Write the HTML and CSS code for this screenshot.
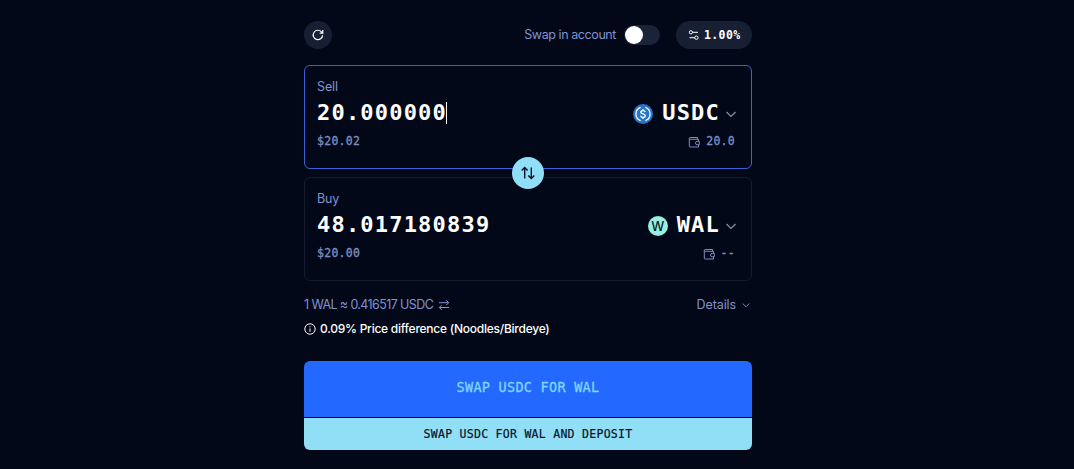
FILE: index.html
```html
<!DOCTYPE html>
<html lang="en">
<head>
    <meta charset="UTF-8">
    <meta name="viewport" content="width=device-width, initial-scale=1.0">
    <title>Swap</title>
    <link rel="stylesheet" href="styles.css">
</head>
<body>
    <main class="swap">
        <div class="toolbar">
            <button class="refresh-btn" aria-label="Refresh">
                <svg width="12" height="12" viewBox="0 0 12 12"><path d="M10.6 6.2A4.7 4.7 0 1 1 9.3 2.7L10.7 4"/><path d="M10.8 1v3.1H7.7"/></svg>
            </button>
            <div class="toolbar-right">
                <span class="switch-label">Swap in account</span>
                <button class="switch" role="switch" aria-checked="false" aria-label="Swap in account"><span class="knob"></span></button>
                <button class="slippage-btn">
                    <svg width="12" height="12" viewBox="0 0 12 12"><circle cx="2.9" cy="3.3" r="1.6"/><path d="M4.8 3.3H10M1.5 8.7h5.2"/><circle cx="8.4" cy="8.7" r="1.7"/></svg>
                    <span>1.00%</span>
                </button>
            </div>
        </div>

        <div class="panels">
            <section class="panel active">
                <div class="label">Sell</div>
                <div class="row">
                    <div class="amount">20.000000<span class="caret"></span></div>
                    <button class="token">
                        <svg class="coin" width="20" height="20" viewBox="0 0 20 20">
                            <circle cx="10" cy="10" r="10" fill="#2775ca"/>
                            <path d="M7.6 3.4a7 7 0 0 0 0 13.2M12.4 3.4a7 7 0 0 1 0 13.2" fill="none" stroke="#fff" stroke-width="1.3"/>
                            <path d="M12.2 8.1C12 7 11.2 6.6 10 6.6c-1.3 0-2.2.6-2.2 1.6 0 2.3 4.5 1.2 4.5 3.5 0 1-.9 1.7-2.3 1.7-1.3 0-2.2-.6-2.4-1.7M10 5v1.6M10 13.4V15" fill="none" stroke="#fff" stroke-width="1.3"/>
                        </svg>
                        <span class="symbol">USDC</span>
                        <svg class="chevron" width="12" height="12" viewBox="0 0 12 12"><path d="M1.5 4L6 8.5 10.5 4"/></svg>
                    </button>
                </div>
                <div class="row sub">
                    <span>$20.02</span>
                    <span class="balance">
                        <svg width="12" height="12" viewBox="0 0 12 12"><path d="M9.5 3.3V1.5H2.2a.9.9 0 0 0 0 1.8h8.3v2M1.3 2.4V10q0 1 1 1h8.2V8.8"/><path d="M11.3 5.3v3.4H9.2a1.7 1.7 0 0 1 0-3.4z"/></svg>
                        <span>20.0</span>
                    </span>
                </div>
            </section>

            <button class="flip-btn" aria-label="Reverse">
                <svg width="16" height="16" viewBox="0 0 16 16"><path d="M4.7 13.6V2.5M1.7 5.5l3-3 3 3M11.3 2.4v11.1M8.3 10.5l3 3 3-3"/></svg>
            </button>

            <section class="panel">
                <div class="label">Buy</div>
                <div class="row">
                    <div class="amount">48.017180839</div>
                    <button class="token">
                        <span class="coin wal">W</span>
                        <span class="symbol">WAL</span>
                        <svg class="chevron" width="12" height="12" viewBox="0 0 12 12"><path d="M1.5 4L6 8.5 10.5 4"/></svg>
                    </button>
                </div>
                <div class="row sub">
                    <span>$20.00</span>
                    <span class="balance">
                        <svg width="12" height="12" viewBox="0 0 12 12"><path d="M9.5 3.3V1.5H2.2a.9.9 0 0 0 0 1.8h8.3v2M1.3 2.4V10q0 1 1 1h8.2V8.8"/><path d="M11.3 5.3v3.4H9.2a1.7 1.7 0 0 1 0-3.4z"/></svg>
                        <span>--</span>
                    </span>
                </div>
            </section>
        </div>

        <div class="info">
            <div class="rate">
                <span class="rate-text">1 WAL ≈ 0.416517 USDC</span>
                <svg width="12" height="12" viewBox="0 0 12 12"><path d="M1 3.7h9.5M8.3 1.3l2.4 2.4-2.4 2.4M11 8.5H1.5M3.7 6.1L1.3 8.5l2.4 2.4"/></svg>
            </div>
            <button class="details">
                <span>Details</span>
                <svg width="12" height="12" viewBox="0 0 12 12"><path d="M2.7 4.5L6 7.8l3.3-3.3"/></svg>
            </button>
        </div>

        <div class="notice">
            <svg width="12" height="12" viewBox="0 0 12 12"><circle cx="6" cy="6" r="5.2"/><path d="M6 5.5v3.2M6 3.2v1.1"/></svg>
            <span>0.09% Price difference (Noodles/Birdeye)</span>
        </div>

        <div class="actions">
            <button class="swap-btn">SWAP USDC FOR WAL</button>
            <button class="deposit-btn">SWAP USDC FOR WAL AND DEPOSIT</button>
        </div>
    </main>
</body>
</html>
```
FILE: styles.css
```css
* {
    margin: 0;
    padding: 0;
    box-sizing: border-box;
}

body {
    background: #020817;
    color: #fff;
    font-family: Inter, "Liberation Sans", sans-serif;
    font-size: 12.5px;
    line-height: 20px;
    overflow: hidden;
}

button {
    background: none;
    border: none;
    color: inherit;
    font: inherit;
    letter-spacing: inherit;
    cursor: pointer;
}

svg {
    display: block;
    flex-shrink: 0;
    fill: none;
    stroke: currentColor;
}

.swap {
    width: 448px;
    margin-left: 304px;
    padding-top: 21px;
}

.toolbar,
.toolbar-right,
.row,
.token,
.balance,
.info,
.rate,
.details,
.notice {
    display: flex;
    align-items: center;
}

.toolbar,
.row,
.info {
    justify-content: space-between;
}

.toolbar {
    height: 28px;
}

.refresh-btn {
    display: flex;
    align-items: center;
    justify-content: center;
    width: 28px;
    height: 28px;
    border-radius: 50%;
    background: #171f33;
}

.refresh-btn svg {
    stroke-width: 1.2;
}

.switch-label {
    color: #8192cf;
    letter-spacing: -0.42px;
}

.switch {
    width: 36px;
    height: 20px;
    margin: 0 16px 0 8px;
    border-radius: 10px;
    background: #1b2338;
}

.knob {
    display: block;
    width: 18px;
    height: 18px;
    margin-left: 1px;
    border-radius: 50%;
    background: #fff;
}

.slippage-btn {
    display: flex;
    align-items: center;
    gap: 4px;
    width: 76px;
    height: 28px;
    padding: 0 12px;
    border-radius: 14px;
    background: #171f33;
    font: bold 11.5px "DejaVu Sans Mono", monospace;
    letter-spacing: 0.38px;
}

.panels {
    position: relative;
    display: flex;
    flex-direction: column;
    gap: 8px;
    margin-top: 16px;
}

.panel {
    height: 104px;
    padding: 11px 14px 0 12px;
    border: 1px solid #151c2d;
    border-radius: 6px;
}

.panel.active {
    border-color: #3a62d8;
}

.label {
    height: 20px;
    color: #8192cf;
    letter-spacing: -0.1px;
}

.amount,
.symbol {
    font: bold 22px/32px "DejaVu Sans Mono", monospace;
    letter-spacing: 1.2px;
}

.amount {
    display: flex;
    align-items: center;
}

.caret {
    width: 1px;
    height: 22px;
    margin-left: -1px;
    background: #fff;
}

.coin {
    width: 20px;
    height: 20px;
    margin-right: 9px;
    stroke: none;
}

.coin.wal {
    border-radius: 50%;
    background: #98efdf;
    color: #0d2028;
    font-size: 13px;
    font-weight: 500;
    text-align: center;
}

.token .coin,
.token .chevron {
    margin-top: 2px;
}

.chevron {
    margin-left: 5px;
    color: #8f96a6;
    stroke-width: 1.1;
}

.row.sub {
    height: 24px;
    padding-right: 2px;
    color: #7d8dc0;
    font: 11.5px "DejaVu Sans Mono", monospace;
    letter-spacing: 0.28px;
    -webkit-text-stroke: 0.3px;
}

.balance {
    gap: 6px;
}

.balance svg {
    margin-top: 1px;
}

.flip-btn {
    position: absolute;
    top: 92px;
    left: 208px;
    display: flex;
    align-items: center;
    justify-content: center;
    width: 32px;
    height: 32px;
    border-radius: 50%;
    background: #8edff7;
    color: #061226;
}

.flip-btn svg {
    stroke-width: 1.4;
}

.info {
    height: 20px;
    margin-top: 14px;
    color: #8192cf;
}

.rate {
    gap: 5px;
}

.rate-text {
    letter-spacing: -0.6px;
}

.details {
    gap: 4px;
    letter-spacing: -0.1px;
}

.notice {
    gap: 4px;
    height: 20px;
    margin-top: 4px;
    font-size: 12px;
    font-weight: 500;
    letter-spacing: -0.25px;
}

.actions {
    display: flex;
    flex-direction: column;
    gap: 1px;
    margin-top: 22px;
    border-radius: 6px;
    overflow: hidden;
}

.swap-btn {
    height: 56px;
    padding-bottom: 4px;
    background: #2469ff;
    color: #7ed6fc;
    font: 13.5px "DejaVu Sans Mono", monospace;
    letter-spacing: 0.27px;
    -webkit-text-stroke: 0.3px;
}

.deposit-btn {
    height: 32px;
    padding-bottom: 1px;
    background: #91dff6;
    color: #061226;
    font: 11.5px "DejaVu Sans Mono", monospace;
    letter-spacing: 0.28px;
    -webkit-text-stroke: 0.2px;
}
```
